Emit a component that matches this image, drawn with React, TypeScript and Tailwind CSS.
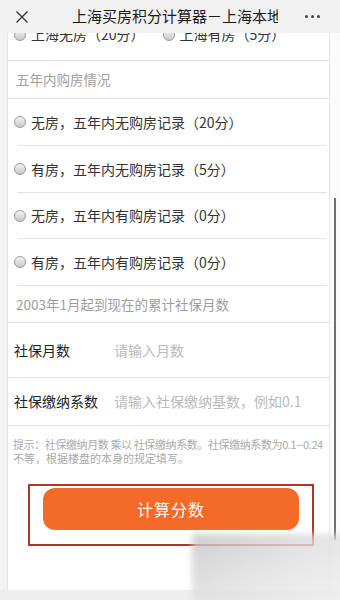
import React from 'react';

const font = { fontFamily: '"Noto Sans CJK SC", "Noto Sans", sans-serif' };

function Radio() {
  return (
    <span className="inline-block w-[12px] h-[12px] rounded-full border border-[#9a9a9a] bg-gradient-to-b from-[#f4f4f4] to-[#c8c8c8] shrink-0" />
  );
}

function Divider({ inset = false }: { inset?: boolean }) {
  return <div className={`h-px bg-[#e3e3e3] ${inset ? 'ml-[9px] mr-[2px]' : ''}`} />;
}

function RadioRow({ label, h = 'h-[46px]' }: { label: string; h?: string }) {
  return (
    <div className={`${h} flex items-center gap-[5px] pl-[6px] text-[14px] text-[#333]`}>
      <Radio />
      <span>{label}</span>
    </div>
  );
}

function Section({ label, h }: { label: string; h: string }) {
  return (
    <div className={`${h} flex items-center pl-[8px] text-[13.5px] text-[#9e9e9e]`}>{label}</div>
  );
}

function InputRow({ label, placeholder, h }: { label: string; placeholder: string; h: string }) {
  return (
    <div className={`${h} flex items-center pl-[6px] text-[14px]`}>
      <span className="w-[100px] shrink-0 text-[#222]">{label}</span>
      <span className="text-[#b9b9b9] whitespace-nowrap">{placeholder}</span>
    </div>
  );
}

export default function App() {
  return (
    <div className="relative w-[340px] h-[600px] overflow-hidden bg-[#fbfbfb]" style={font}>
      {/* scrolled form content */}
      <div className="flex">
        <div className="w-[7px] shrink-0 bg-[#f3f3f3]" />
        <div className="w-[323px] bg-white border-l border-r border-[#e6e6e6]">
          <div className="h-[60px] flex items-end pb-[15px] pl-[6px] gap-[18px] text-[14px] text-[#333]">
            <span className="flex items-center gap-[5px]"><Radio />上海无房（20分）</span>
            <span className="flex items-center gap-[5px]"><Radio />上海有房（5分）</span>
          </div>
          <Divider />
          <Section label="五年内购房情况" h="h-[37px]" />
          <Divider />
          <RadioRow label="无房，五年内无购房记录（20分）" />
          <Divider inset />
          <RadioRow label="有房，五年内无购房记录（5分）" />
          <Divider inset />
          <RadioRow label="无房，五年内有购房记录（0分）" h="h-[45px]" />
          <Divider inset />
          <RadioRow label="有房，五年内有购房记录（0分）" />
          <Divider inset />
          <Section label="2003年1月起到现在的累计社保月数" h="h-[36px]" />
          <Divider />
          <InputRow label="社保月数" placeholder="请输入月数" h="h-[54px]" />
          <Divider />
          <InputRow label="社保缴纳系数" placeholder="请输入社保缴纳基数，例如0.1" h="h-[47px]" />
          <Divider />
          <div className="pt-[11px] pl-[5px] text-[11px] leading-[14px] text-[#aaaaaa]">
            <p className="whitespace-nowrap tracking-[-0.4px]">提示：社保缴纳月数 乘以 社保缴纳系数。社保缴纳系数为0.1--0.24</p>
            <p>不等，根据楼盘的本身的规定填写。</p>
          </div>
          <div className="mt-[19px] ml-[20px] w-[286px] h-[62px] border-2 border-[#b8302c] pt-[2px] pl-[13px]">
            <button className="w-[256px] h-[42px] rounded-[12px] bg-[#f46b27] text-white text-[16px] tracking-[1px]">
              计算分数
            </button>
          </div>
          <div className="h-[60px]" />
        </div>
        <div className="w-[10px] shrink-0 relative">
          <div className="absolute left-[4px] top-[198px] w-[2px] h-[342px] bg-[#6e6e6e]" />
        </div>
      </div>

      {/* bottom gray band */}
      <div className="absolute left-0 right-0 bottom-0 h-[10px] bg-[#eeeeee]" />

      {/* blurred watermark patch */}
      <div className="absolute left-[192px] top-[534px] w-[160px] h-[72px] bg-gradient-to-br from-[#c4c4c4] via-[#e0e0e0] to-[#f2f2f2] blur-[3px] opacity-80" />

      {/* fixed header */}
      <div className="absolute top-0 left-0 right-0 h-[33px] bg-[#f1f1f1] flex items-center">
        <svg className="ml-[15px] shrink-0" width="14" height="14" viewBox="0 0 14 14">
          <path d="M1.5 1.5 L12.5 12.5 M12.5 1.5 L1.5 12.5" stroke="#333" strokeWidth="1.3" fill="none" />
        </svg>
        <div className="ml-[43px] w-[206px] overflow-hidden whitespace-nowrap text-[15px] text-[#1a1a1a]">
          上海买房积分计算器－上海本地宝
        </div>
        <div className="ml-auto mr-[20px] flex gap-[3px]">
          <span className="w-[3px] h-[3px] rounded-full bg-[#444]" />
          <span className="w-[3px] h-[3px] rounded-full bg-[#444]" />
          <span className="w-[3px] h-[3px] rounded-full bg-[#444]" />
        </div>
      </div>
    </div>
  );
}
